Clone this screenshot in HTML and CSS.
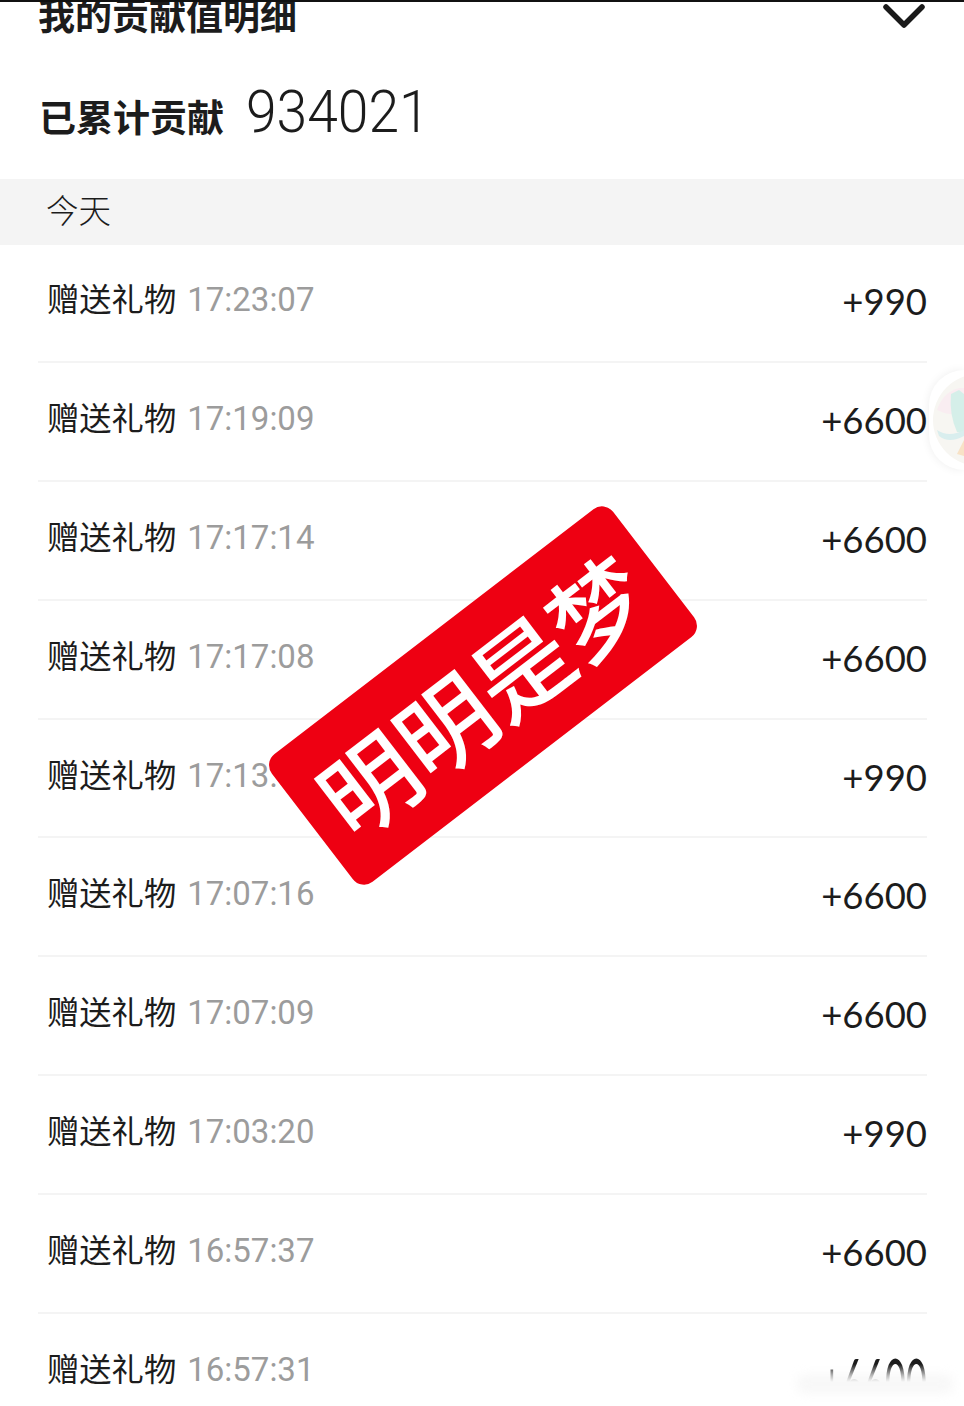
FILE: index.html
```html
<!DOCTYPE html>
<html lang="zh-CN">
<head>
    <meta charset="UTF-8">
    <meta name="viewport" content="width=device-width, initial-scale=1.0">
    <title>我的贡献值明细</title>
    <link rel="stylesheet" href="styles.css">
</head>
<body>

<div class="page">
    <div class="header">
        <div class="title">我的贡献值明细</div>
        <svg class="chevron" viewBox="0 0 42 24" width="42" height="24">
            <path d="M3 3 L21 21 L39 3" fill="none" stroke="#1a1a1a" stroke-width="5.500" stroke-linecap="round" stroke-linejoin="round"/>
        </svg>
    </div>
    <div class="summary">
        <span class="summary-label">已累计贡献</span>
        <span class="summary-value">934021</span>
    </div>

    <div class="day">今天</div>

    <div class="list">
        <div class="row"><div class="row-left"><span class="row-name">赠送礼物</span><span class="row-time">17:23:07</span></div><span class="row-value">+990</span></div>
        <div class="row"><div class="row-left"><span class="row-name">赠送礼物</span><span class="row-time">17:19:09</span></div><span class="row-value">+6600</span></div>
        <div class="row"><div class="row-left"><span class="row-name">赠送礼物</span><span class="row-time">17:17:14</span></div><span class="row-value">+6600</span></div>
        <div class="row"><div class="row-left"><span class="row-name">赠送礼物</span><span class="row-time">17:17:08</span></div><span class="row-value">+6600</span></div>
        <div class="row"><div class="row-left"><span class="row-name">赠送礼物</span><span class="row-time">17:13:02</span></div><span class="row-value">+990</span></div>
        <div class="row"><div class="row-left"><span class="row-name">赠送礼物</span><span class="row-time">17:07:16</span></div><span class="row-value">+6600</span></div>
        <div class="row"><div class="row-left"><span class="row-name">赠送礼物</span><span class="row-time">17:07:09</span></div><span class="row-value">+6600</span></div>
        <div class="row"><div class="row-left"><span class="row-name">赠送礼物</span><span class="row-time">17:03:20</span></div><span class="row-value">+990</span></div>
        <div class="row"><div class="row-left"><span class="row-name">赠送礼物</span><span class="row-time">16:57:37</span></div><span class="row-value">+6600</span></div>
        <div class="row row-last"><div class="row-left"><span class="row-name">赠送礼物</span><span class="row-time">16:57:31</span></div><span class="row-value">+6600</span></div>
    </div>

    <!-- 悬浮头像 -->
    <div class="float-avatar">
        <svg viewBox="0 0 35 100" width="35" height="100">
            <circle cx="50" cy="50" r="46" fill="#f7f6f2"/>
            <path d="M8 40 Q14 22 30 18 L35 18 L35 44 Q20 46 8 40 Z" fill="#f9edf1"/>
            <path d="M22 24 L30 20 L35 24 L35 62 L28 62 Q20 44 22 24 Z" fill="#d5efe9"/>
            <path d="M8 60 Q20 68 35 60 L35 66 Q20 74 10 66 Z" fill="#d9eeee"/>
            <path d="M28 84 L35 70 L35 86 Z" fill="#f8e2c6"/>
        </svg>
    </div>

    <!-- 水印印章 -->
    <div class="stamp">明明是梦</div>

    <!-- 底部手势条的灰影 -->
    <div class="bottom-smudge"></div>
</div>

</body>
</html>
```

FILE: styles.css
```css
/* 页面 */
html, body {
    margin: 0;
    padding: 0;
    background-color: #ffffff;
}

.page {
    position: relative;
    width: 964px;
    height: 1406px;
    overflow: hidden;
    box-sizing: border-box;
    border-top: 2px solid #111111;
    font-family: "Noto Sans CJK SC", "Liberation Sans", sans-serif;
    color: #1c1c1c;
}

/* 顶部标题 */
.header {
    display: flex;
    justify-content: space-between;
    align-items: flex-start;
    height: 78px;
    padding: 0 39px 0 38px;
}

.title {
    margin-top: -16px;
    font-size: 37px;
    line-height: 56px;
    font-weight: 700;
}

.chevron {
    margin-top: 2px;
    margin-right: 0;
}

/* 累计贡献 */
.summary {
    display: flex;
    align-items: flex-start;
    gap: 22px;
    height: 99px;
    padding: 0 39px;
}

.summary-label {
    font-size: 37px;
    line-height: 50px;
    font-weight: 700;
    margin-top: 11px;
}

.summary-value {
    display: inline-block;
    margin-top: -3px;
    font-family: Roboto, sans-serif;
    font-size: 60px;
    line-height: 70px;
    font-weight: 300;
    transform: scaleX(0.92);
    transform-origin: left center;
}

.day {
    height: 66px;
    padding-left: 46px;
    background-color: #f4f4f4;
    font-size: 32.500px;
    line-height: 60px;
    font-weight: 300;
}

/* 明细列表 */
.list {
    margin: -1px 37px 0 38px;
}

.row {
    display: flex;
    justify-content: space-between;
    align-items: flex-start;
    box-sizing: border-box;
    height: 118.900px;
    padding: 29px 0 0 9px;
    border-bottom: 2px solid #f4f4f4;
}

.row-last {
    border-bottom: none;
}

.row-left {
    display: flex;
    align-items: center;
    gap: 11px;
    height: 48px;
}

.row-name {
    font-size: 32.300px;
    line-height: 48px;
    font-weight: 400;
}

.row-time {
    margin-top: 6px;
    font-family: Roboto, sans-serif;
    font-size: 33px;
    line-height: 48px;
    color: #9c9c9c;
}

.row-value {
    margin-top: 1px;
    font-family: Lato, sans-serif;
    font-size: 36.500px;
    line-height: 54px;
    color: #1c1c1c;
}

/* 最后一行被手势条糊掉，只剩数字上半截 */
.row-last .row-value {
    transform: scaleY(2);
    transform-origin: 50% 14px;
    -webkit-mask-image: linear-gradient(to bottom, #000 17px, transparent 26px);
    mask-image: linear-gradient(to bottom, #000 17px, transparent 26px);
}

/* 悬浮头像 */
.float-avatar {
    position: absolute;
    top: 368px;
    right: 0;
    width: 35px;
    height: 100px;
    border-radius: 50px 0 0 50px;
    background-color: #ffffff;
    box-shadow: 0 0 10px rgba(0, 0, 0, 0.07);
}

.float-avatar svg {
    display: block;
}

/* 水印印章 */
.stamp {
    position: absolute;
    left: 268px;
    top: 613px;
    width: 430px;
    height: 161px;
    border-radius: 14px;
    background-color: #ee0012;
    color: #ffffff;
    font-size: 96px;
    line-height: 156px;
    font-weight: 500;
    text-align: center;
    transform: rotate(-37.500deg);
}

/* 底部灰影 */
.bottom-smudge {
    position: absolute;
    left: 796px;
    top: 1372px;
    width: 158px;
    height: 20px;
    border-radius: 10px;
    background-color: rgba(232, 232, 232, 0.3);
    filter: blur(5px);
}
```
